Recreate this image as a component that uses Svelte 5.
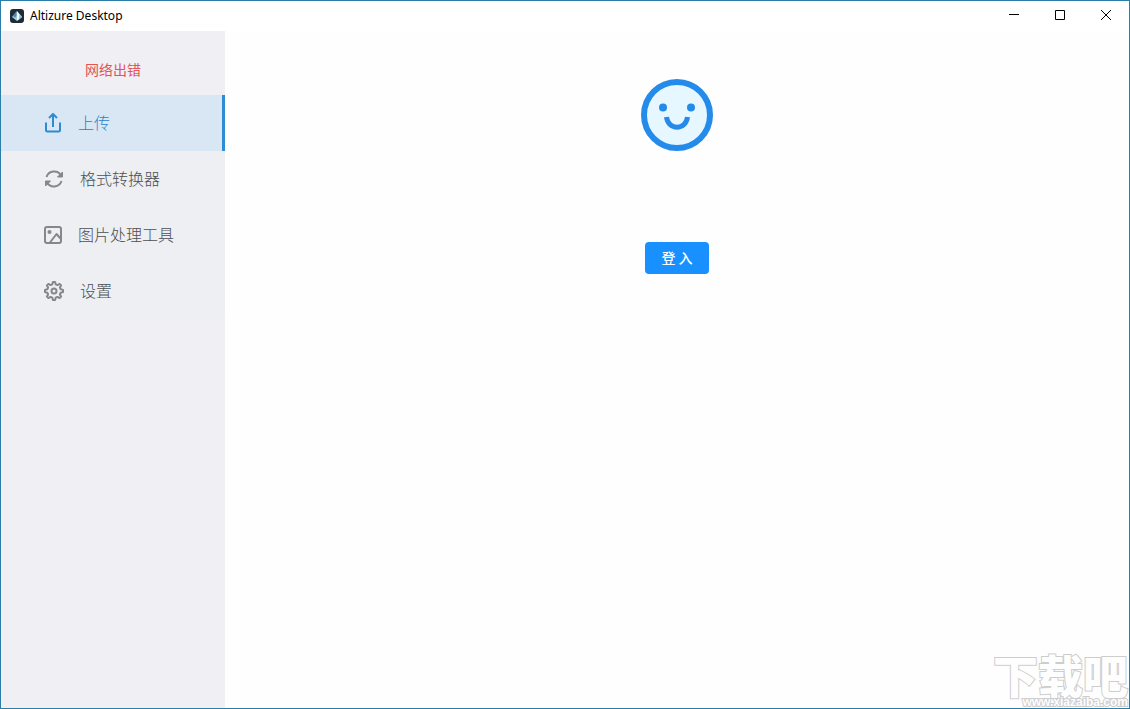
<script>
  let active = $state('upload');
  const items = [
    { id: 'upload', label: '上传' },
    { id: 'convert', label: '格式转换器' },
    { id: 'image', label: '图片处理工具' },
    { id: 'settings', label: '设置' }
  ];
</script>

<div class="window">
  <header class="titlebar">
    <svg class="logo" viewBox="0 0 14 14" aria-hidden="true">
      <rect width="14" height="14" rx="3" fill="#202a35" />
      <path d="M7 2L2 8L7 12Z" fill="#9bcbe0" />
      <path d="M6.500 2.500L3 7L5 8.500L6.500 7Z" fill="#4b87a5" />
      <path d="M7 2L12 8L7 12Z" fill="#f1fafc" />
      <path d="M9.500 5L12 8L9 10.500Z" fill="#8ebbd0" />
    </svg>
    <span class="title">Altizure Desktop</span>
    <div class="controls">
      <button aria-label="Minimize">
        <svg viewBox="0 0 12 12"><path d="M1 5.500H11" /></svg>
      </button>
      <button aria-label="Maximize">
        <svg viewBox="0 0 12 12"><path d="M1.500 1.500H10.500V10.500H1.500Z" /></svg>
      </button>
      <button aria-label="Close">
        <svg viewBox="0 0 12 12"><path d="M1 1L11 11M11 1L1 11" /></svg>
      </button>
    </div>
  </header>

  <div class="body">
    <aside>
      <p class="status">网络出错</p>
      <nav>
        {#each items as item}
          <button class="item" class:active={active === item.id} onclick={() => (active = item.id)}>
            {#if item.id === 'upload'}
              <svg class="narrow" viewBox="0 0 18 20" aria-hidden="true">
                <path d="M9 14V1.500M5 5L9 1L13 5M2 9.500V17Q2 18.500 3.500 18.500H14.500Q16 18.500 16 17V9.500" />
              </svg>
            {:else if item.id === 'convert'}
              <svg viewBox="0 0 20 20" aria-hidden="true">
                <path d="M2.500 8A8 8 0 0 1 17 6.500M17.500 12A8 8 0 0 1 3 13.500" />
                <path d="M18.500 3V8H13.500ZM1.500 17V12H6.500Z" fill="currentColor" stroke-width="1" />
              </svg>
            {:else if item.id === 'image'}
              <svg class="narrow" viewBox="0 0 18 20" aria-hidden="true">
                <rect x="1" y="2" width="16" height="16" rx="2" />
                <circle cx="5.500" cy="7" r="2" fill="currentColor" stroke="none" />
                <path d="M6 17.500L12.500 9L17 14" />
              </svg>
            {:else}
              <svg viewBox="0 0 20 20" aria-hidden="true">
                <path d="M8.300 3.300L8.900 1H11.100L11.700 3.300L13.500 4.100L15.600 2.900L17.100 4.400L15.900 6.500L16.700 8.300L19 8.900V11.100L16.700 11.700L15.900 13.500L17.100 15.600L15.600 17.100L13.500 15.900L11.700 16.700L11.100 19H8.900L8.300 16.700L6.500 15.900L4.400 17.100L2.900 15.600L4.100 13.500L3.300 11.700L1 11.100V8.900L3.300 8.300L4.100 6.500L2.900 4.400L4.400 2.900L6.500 4.100Z" />
                <circle cx="10" cy="10" r="2.500" />
              </svg>
            {/if}
            <span>{item.label}</span>
          </button>
        {/each}
      </nav>
    </aside>

    <main>
      <svg class="face" viewBox="0 0 72 72" aria-hidden="true">
        <circle cx="36" cy="36" r="33" fill="#e6f7ff" stroke="#258bea" stroke-width="6" />
        <circle cx="22" cy="28.500" r="4" fill="#258bea" />
        <circle cx="50" cy="28.500" r="4" fill="#258bea" />
        <path d="M25.500 38C27 51.500 45 51.500 46.500 38" fill="none" stroke="#258bea" stroke-width="5" />
      </svg>
      <button class="login">登 入</button>
    </main>
  </div>

  <div class="mark">
    <span class="mark-name">下载吧</span>
    <span class="mark-url">www.xiazaiba.com</span>
  </div>
</div>

<style>
  :global(body) {
    background: #fefefe;
  }
  .window {
    position: relative;
    display: flex;
    flex-direction: column;
    box-sizing: border-box;
    min-height: 100vh;
    border: 1px solid #2b7ea8;
    overflow: hidden;
    background: #fefefe;
    font-family: 'Noto Sans', 'Noto Sans CJK SC', sans-serif;
  }
  button {
    border: 0;
    margin: 0;
    font-family: inherit;
    cursor: pointer;
  }
  .titlebar {
    display: flex;
    align-items: center;
    height: 30px;
    padding-left: 9px;
    background: #fff;
  }
  .logo {
    width: 14px;
    height: 14px;
    margin-right: 6px;
  }
  .title {
    font-size: 12px;
    line-height: 16px;
    color: #000;
  }
  .controls {
    display: flex;
    align-self: flex-start;
    margin-left: auto;
  }
  .controls button {
    display: flex;
    align-items: center;
    justify-content: center;
    width: 46px;
    height: 28px;
    padding: 0;
    background: none;
  }
  .controls svg {
    width: 12px;
    height: 12px;
    fill: none;
    stroke: #000;
    stroke-width: 1;
  }
  .body {
    display: flex;
    flex: 1;
  }
  aside {
    width: 224px;
    flex: none;
    background: #efeff4;
  }
  .status {
    margin: 0;
    padding: 27px 0 15px;
    font-family: 'Noto Sans CJK SC', sans-serif;
    font-size: 14px;
    line-height: 22px;
    text-align: center;
    color: #e25458;
  }
  nav {
    background: #edeff3;
  }
  .item {
    display: flex;
    align-items: center;
    gap: 16px;
    box-sizing: border-box;
    width: 100%;
    height: 56px;
    padding: 0 0 0 43px;
    background: none;
    color: #4c4e51;
    font-family: 'Noto Sans CJK SC', sans-serif;
    font-size: 16px;
    font-weight: 300;
    line-height: 24px;
    text-align: left;
  }
  .item span {
    padding-bottom: 2px;
  }
  .item svg {
    width: 20px;
    height: 20px;
    fill: none;
    stroke: #85878a;
    stroke-width: 2;
    stroke-linejoin: round;
    color: #85878a;
  }
  .item svg.narrow {
    width: 18px;
  }
  .item.active {
    border-right: 3px solid #2d8cd4;
    background: #d9e7f4;
    color: #1f84cc;
  }
  .item.active svg {
    stroke: #2d8cd0;
    color: #2d8cd0;
  }
  main {
    display: flex;
    flex: 1;
    flex-direction: column;
    align-items: center;
    padding-top: 48px;
  }
  .face {
    width: 72px;
    height: 72px;
    margin-bottom: 91px;
  }
  .login {
    width: 64px;
    height: 32px;
    padding: 0 0 2px;
    border-radius: 4px;
    background: #1890ff;
    color: #fff;
    font-family: 'Noto Sans CJK SC', sans-serif;
    font-size: 14px;
    font-weight: 500;
    line-height: 22px;
  }
  .mark {
    position: absolute;
    right: 1px;
    bottom: 0;
    display: flex;
    flex-direction: column;
    align-items: flex-end;
    color: #fefefe;
    font-family: 'Noto Sans CJK SC', sans-serif;
    font-weight: 900;
    -webkit-text-stroke: 2px #cdcdcd;
    paint-order: stroke fill;
    pointer-events: none;
  }
  .mark-name {
    font-size: 45px;
    line-height: 45px;
  }
  .mark-url {
    font-family: 'Liberation Sans', sans-serif;
    font-size: 12px;
    line-height: 11px;
    font-weight: 700;
  }
</style>
